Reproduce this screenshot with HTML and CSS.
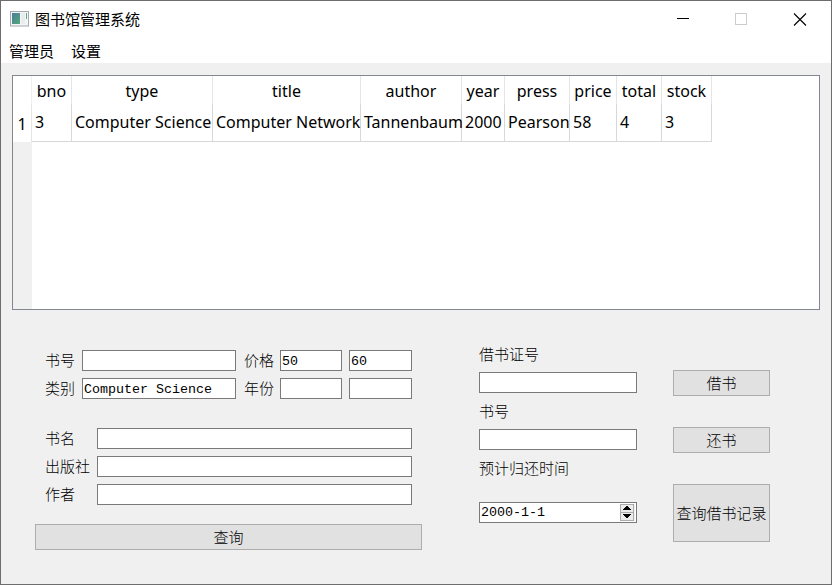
FILE: index.html
```html
<!DOCTYPE html>
<html lang="zh-CN">
<head>
<meta charset="utf-8">
<title>图书馆管理系统</title>
<link rel="stylesheet" href="styles.css">
</head>
<body>
<div class="window">
  <header class="titlebar">
    <svg class="app-icon" width="19" height="16" viewBox="0 0 19 16">
      <defs><linearGradient id="g" x1="0" y1="0" x2="1" y2="1"><stop offset="0" stop-color="#4a7c9c"/><stop offset="1" stop-color="#55a878"/></linearGradient></defs>
      <rect x=".5" y=".5" width="18" height="14.5" fill="#f4f5f6" stroke="#a3a9ae"/>
      <rect x="2" y="2" width="8" height="11" fill="url(#g)"/>
      <rect x="11" y="2" width="4" height="11" fill="#e9ecee"/>
      <rect x="16" y="2" width="1" height="6" fill="#62a48c"/>
    </svg>
    <span class="caption">图书馆管理系统</span>
    <svg class="controls" width="130" height="14" viewBox="0 0 130 14" fill="none">
      <path d="M0 6.5H12" stroke="#000"/>
      <rect x="58.500" y="1.500" width="11" height="11" stroke="#ccc"/>
      <path d="M117 1.500L129 13.500M129 1.500L117 13.500" stroke="#000" stroke-width="1.100"/>
    </svg>
  </header>
  <nav class="menubar"><span>管理员</span><span>设置</span></nav>
  <div class="table-view">
    <div class="row-head"><div class="row-number">1</div></div>
    <table>
      <colgroup><col class="c-bno"><col class="c-type"><col class="c-title"><col class="c-author"><col class="c-year"><col class="c-press"><col class="c-price"><col class="c-total"><col class="c-stock"></colgroup>
      <thead><tr><th>bno</th><th>type</th><th>title</th><th>author</th><th>year</th><th>press</th><th>price</th><th>total</th><th>stock</th></tr></thead>
      <tbody><tr><td>3</td><td>Computer Science</td><td>Computer Network</td><td>Tannenbaum</td><td>2000</td><td>Pearson</td><td>58</td><td>4</td><td>3</td></tr></tbody>
    </table>
  </div>
  <main class="forms">
    <section class="search">
      <div class="filters">
        <label>书号</label><input type="text"><label>价格</label><input class="num" type="text" value="50"><input class="num" type="text" value="60">
        <label>类别</label><input type="text" value="Computer Science"><label>年份</label><input type="text"><input type="text">
      </div>
      <div class="details">
        <label>书名</label><input type="text">
        <label>出版社</label><input type="text">
        <label>作者</label><input type="text">
      </div>
      <button>查询</button>
    </section>
    <section class="loan">
      <label>借书证号</label><input type="text">
      <label>书号</label><input type="text">
      <label>预计归还时间</label>
      <div class="date"><span>2000-1-1</span>
        <svg width="15" height="17" viewBox="0 0 15 17" shape-rendering="crispEdges">
          <rect width="15" height="17" fill="#f0f0f0"/>
          <path d="M.5.500H13.500V16.500H.5ZM.5 8.500H13.500" fill="#ececec" stroke="#acacac"/>
          <path d="M6 2h2v1h1v1h1v1h1v1H3V5h1V4h1V3h1zM3 10h8v1h-1v1H9v1H8v1H6v-1H5v-1H4v-1H3z" fill="#000"/>
        </svg>
      </div>
    </section>
    <section class="actions"><button>借书</button><button>还书</button><button class="tall">查询借书记录</button></section>
  </main>
</div>
</body>
</html>
```
FILE: styles.css
```css
* { box-sizing: border-box; }
body { margin: 0; color: #000; background: #f0f0f0; font: 15px/20px "Noto Sans CJK SC", sans-serif; }
.window { width: 832px; height: 585px; border: 1px solid #6d6d6d; background: #f0f0f0; overflow: hidden; }
.titlebar { display: flex; height: 37px; background: #fff; padding-left: 9px; }
.app-icon { margin-top: 10px; }
.caption { margin: 8px 0 0 6px; }
.controls { margin: 11px 24px 0 auto; }
.menubar { display: flex; gap: 17px; height: 25px; padding: 3px 8px; background: #fff; }
.table-view { display: flex; width: 808px; height: 235px; margin: 12px 0 0 11px; border: 1px solid #828790; background: #fff; font: 16px/22px "Noto Sans", sans-serif; }
.row-head { width: 19px; padding-top: 28px; background: linear-gradient(#fff 66px, #f0f0f0 66px); border-right: 1px solid #f0f0f0; }
.row-number { height: 38px; line-height: 41px; text-align: center; border-right: 1px solid #e5e5e5; margin-right: -1px; }
table { width: 680px; height: 66px; table-layout: fixed; border-collapse: separate; border-spacing: 0; }
th, td { padding: 0; border-right: 1px solid #d8d8d8; white-space: nowrap; font-weight: 400; }
th { height: 28px; border-color: #e5e5e5; padding-top: 2px; }
td { height: 38px; padding: 0 0 2px 3px; border-bottom: 1px solid #d8d8d8; }
.c-bno { width: 40px; }
.c-type { width: 141px; }
.c-title { width: 148px; }
.c-author { width: 101px; }
.c-year { width: 43px; }
.c-press { width: 65px; }
.c-price { width: 47px; }
.c-total { width: 45px; }
.c-stock { width: 50px; }
.forms { display: flex; align-items: flex-start; padding-left: 34px; }
label { font-weight: 300; white-space: nowrap; }
input, .date { min-width: 0; width: 100%; height: 21px; margin: 0; padding: 1px 1px 0; border: 1px solid #7a7a7a; border-radius: 0; background: #fff; color: #000; font: 13.333px/17px "Liberation Mono", monospace; }
button { padding: 0; height: 26px; border: 1px solid #adadad; background: #e1e1e1; color: #000; font: 300 15px/20px "Noto Sans CJK SC", sans-serif; white-space: nowrap; }
.search { width: 387px; padding-top: 40px; }
.filters { display: grid; grid-template-columns: 30px 154px 30px 62px 63px; gap: 7px; padding-left: 10px; }
.filters label:nth-of-type(even) { margin-left: 1px; }
.details { display: grid; grid-template-columns: 45px 315px; gap: 7px; margin: 29px 0 19px; padding-left: 10px; }
.search button { display: block; width: 387px; }
.loan { width: 158px; margin: 34px 0 0 57px; display: flex; flex-direction: column; }
.loan label { height: 20px; }
.loan input { margin: 8px 0; }
.loan .date { display: flex; justify-content: space-between; margin-top: 24px; padding-right: 1px; }
.date svg { margin-top: 0; }
.actions { display: flex; flex-direction: column; gap: 31px; width: 97px; margin: 60px 0 0 36px; }
.actions .tall { height: 58px; }
```
